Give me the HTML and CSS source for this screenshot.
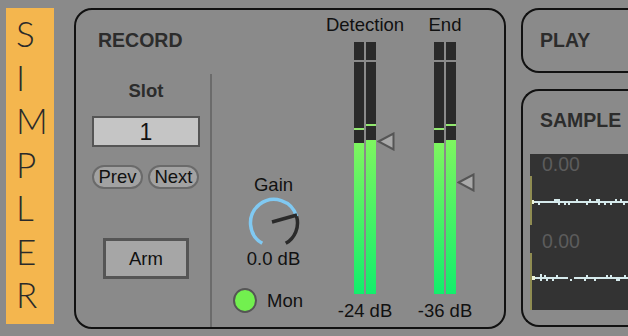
FILE: index.html
```html
<!DOCTYPE html>
<html lang="en">
<head>
  <meta charset="UTF-8">
  <title>Simpler</title>
  <link rel="stylesheet" href="styles.css">
</head>
<body>
  <div class="strip">
    <span>S</span><span>I</span><span>M</span><span>P</span><span>L</span><span>E</span><span>R</span>
  </div>

  <div class="record">
    <div class="rec-left">
      <div class="title">RECORD</div>
      <div class="label bold slot-label">Slot</div>
      <div class="slot-box">1</div>
      <div class="pills">
        <span class="pill">Prev</span>
        <span class="pill">Next</span>
      </div>
      <div class="arm">Arm</div>
    </div>

    <div class="divider"></div>

    <div class="gain-col">
      <div class="label">Gain</div>
      <svg class="knob" width="52" height="52" viewBox="0 0 52 52">
        <path d="M14.25 46.35 A23.5 23.5 0 1 1 48.59 19.52" fill="none" stroke="#80c9f2" stroke-width="3.5"/>
        <path d="M48.59 19.52 A23.5 23.5 0 0 1 37.75 46.35" fill="none" stroke="#2a2a2a" stroke-width="3.5"/>
        <line x1="24" y1="25" x2="49" y2="18" stroke="#2a2a2a" stroke-width="3.5"/>
      </svg>
      <div class="label">0.0 dB</div>
      <div class="mon">
        <span class="led"></span>
        <span class="label">Mon</span>
      </div>
    </div>

    <div class="meter-col">
      <div class="label">Detection</div>
      <div class="meters">
        <div class="meter">
          <div class="seg-top"></div>
          <div class="seg-main">
            <div class="peak" style="margin-bottom:13px"></div>
            <div class="fill" style="height:151px"></div>
          </div>
        </div>
        <div class="meter">
          <div class="seg-top"></div>
          <div class="seg-main">
            <div class="peak" style="margin-bottom:14px"></div>
            <div class="fill" style="height:154px"></div>
          </div>
        </div>
        <svg class="marker" style="top:90px" width="18" height="19" viewBox="0 0 18 19">
          <polygon points="1.5,9.5 16.5,1.5 16.5,17.5" fill="#a9a9a9" stroke="#555" stroke-width="2"/>
        </svg>
      </div>
      <div class="label">-24 dB</div>
    </div>

    <div class="meter-col end">
      <div class="label">End</div>
      <div class="meters">
        <div class="meter">
          <div class="seg-top"></div>
          <div class="seg-main">
            <div class="peak" style="margin-bottom:13px"></div>
            <div class="fill" style="height:151px"></div>
          </div>
        </div>
        <div class="meter">
          <div class="seg-top"></div>
          <div class="seg-main">
            <div class="peak" style="margin-bottom:14px"></div>
            <div class="fill" style="height:154px"></div>
          </div>
        </div>
        <svg class="marker" style="top:131px" width="18" height="19" viewBox="0 0 18 19">
          <polygon points="1.5,9.5 16.5,1.5 16.5,17.5" fill="#a9a9a9" stroke="#555" stroke-width="2"/>
        </svg>
      </div>
      <div class="label">-36 dB</div>
    </div>
  </div>

  <div class="side">
    <div class="panel play">
      <div class="title">PLAY</div>
    </div>
    <div class="panel sample">
      <div class="title">SAMPLE</div>
      <div class="wave">
        <div class="chan first">
          <div class="chan-label">0.00</div>
          <div class="trace">
            <svg width="96" height="49" viewBox="0 0 96 49">
              <rect x="0" y="25" width="96" height="2" fill="#d6eaec"/>
              <rect x="0" y="24" width="2" height="4" fill="#eef3d6"/>
              <rect x="6" y="27" width="2" height="2" fill="#d6eaec"/>
              <rect x="22" y="23" width="6" height="2" fill="#d6eaec"/>
              <rect x="26" y="27" width="2" height="2" fill="#d6eaec"/>
              <rect x="32" y="27" width="2" height="2" fill="#d6eaec"/>
              <rect x="36" y="27" width="2" height="2" fill="#d6eaec"/>
              <rect x="44" y="23" width="2" height="2" fill="#d6eaec"/>
              <rect x="54" y="27" width="2" height="2" fill="#d6eaec"/>
              <rect x="57" y="23" width="2" height="2" fill="#d6eaec"/>
              <rect x="64" y="23" width="4" height="2" fill="#d6eaec"/>
              <rect x="66" y="27" width="2" height="2" fill="#d6eaec"/>
              <rect x="72" y="27" width="2" height="2" fill="#d6eaec"/>
              <rect x="78" y="27" width="2" height="2" fill="#d6eaec"/>
              <rect x="83" y="23" width="2" height="2" fill="#d6eaec"/>
              <rect x="88" y="23" width="2" height="2" fill="#d6eaec"/>
              <rect x="91" y="27" width="2" height="2" fill="#d6eaec"/>
            </svg>
          </div>
        </div>
        <div class="chan">
          <div class="chan-label">0.00</div>
          <div class="trace">
            <svg width="96" height="57" viewBox="0 0 96 57">
              <rect x="0" y="24" width="36" height="2" fill="#d6eaec"/>
              <rect x="42" y="24" width="54" height="2" fill="#d6eaec"/>
              <rect x="0" y="23" width="3" height="4" fill="#eef3d6"/>
              <rect x="8" y="21" width="2" height="3" fill="#d6eaec"/>
              <rect x="8" y="26" width="2" height="2" fill="#d6eaec"/>
              <rect x="12" y="22" width="2" height="2" fill="#d6eaec"/>
              <rect x="14" y="26" width="2" height="2" fill="#d6eaec"/>
              <rect x="20" y="26" width="2" height="2" fill="#d6eaec"/>
              <rect x="24" y="22" width="2" height="2" fill="#d6eaec"/>
              <rect x="38" y="26" width="2" height="2" fill="#d6eaec"/>
              <rect x="52" y="26" width="2" height="2" fill="#d6eaec"/>
              <rect x="54" y="22" width="2" height="2" fill="#d6eaec"/>
              <rect x="62" y="26" width="2" height="2" fill="#d6eaec"/>
              <rect x="74" y="22" width="2" height="2" fill="#d6eaec"/>
              <rect x="78" y="22" width="2" height="2" fill="#d6eaec"/>
              <rect x="84" y="26" width="4" height="2" fill="#d6eaec"/>
              <rect x="92" y="22" width="2" height="2" fill="#d6eaec"/>
            </svg>
          </div>
        </div>
      </div>
    </div>
  </div>
</body>
</html>
```

FILE: styles.css
```css
html, body { margin: 0; padding: 0; overflow: hidden; }
body {
  width: 628px; height: 336px; box-sizing: border-box;
  padding: 8px 0 0 6px;
  background: #8a8a8a; color: #111;
  font-family: "Liberation Sans", Arial, sans-serif;
  display: flex; align-items: flex-start;
}

.strip {
  flex-shrink: 0; width: 48px; height: 316px; box-sizing: border-box;
  padding: 4px 0 0 10px;
  background: #f4b64e; color: #2a2a2a;
  display: flex; flex-direction: column;
  font-family: Lato, "Open Sans", sans-serif; font-weight: 300;
  font-size: 35px; line-height: 43.5px;
}

.title { font-size: 19.5px; line-height: 20px; font-weight: bold; color: #2c2c2c; }
.label { font-size: 18.5px; line-height: 20px; white-space: nowrap; }
.bold { font-weight: bold; color: #2c2c2c; }

.record {
  flex-shrink: 0; width: 432px; height: 321px; box-sizing: border-box;
  margin-left: 20px;
  border: 2px solid #111; border-radius: 18px;
  display: flex;
}

.rec-left {
  width: 134px; box-sizing: border-box; padding: 20px 10px 0 16px;
  display: flex; flex-direction: column;
}
.rec-left .title { margin-left: 6px; }
.slot-label { margin-top: 31px; text-align: center; }
.slot-box {
  margin-top: 15px; height: 31px; box-sizing: border-box; padding-top: 2px;
  background: #c5c5c5; border: 2px solid #555;
  text-align: center; font-size: 23px; line-height: 25px;
}
.pills { margin-top: 18px; display: flex; gap: 5px; }
.pill {
  width: 51px; height: 24px; box-sizing: border-box;
  border: 2px solid #6a6a6a; border-radius: 12px; background: #a2a2a2;
  text-align: center; font-size: 18.5px; line-height: 20px;
}
.arm {
  align-self: center; margin-top: 49px;
  width: 86px; height: 41px; box-sizing: border-box;
  border: 3px solid #555; background: #a6a6a6;
  text-align: center; font-size: 18.5px; line-height: 35px;
}

.divider { width: 2px; margin-top: 64px; background: #6b6b6b; }

.gain-col {
  width: 123px; padding-top: 165px;
  display: flex; flex-direction: column; align-items: center;
}
.knob { display: block; margin-top: 2px; }
.mon {
  align-self: flex-start; margin: 19px 0 0 21px;
  display: flex; align-items: center; gap: 10px;
}
.led {
  width: 24px; height: 25px; box-sizing: border-box;
  border: 2px solid #555; border-radius: 50%; background: #72f04f;
}

.meter-col {
  width: 60px; padding-top: 5px;
  display: flex; flex-direction: column; align-items: center;
}
.meter-col.end { margin-left: 20px; }
.meters { position: relative; margin: 7px 0; display: flex; gap: 2px; height: 252px; }
.meter { width: 10px; display: flex; flex-direction: column; }
.seg-top { height: 18px; background: #2a2a2a; }
.seg-main {
  flex: 1; margin-top: 2px; background: #2a2a2a;
  display: flex; flex-direction: column; justify-content: flex-end;
}
.peak { height: 2px; background: #93e870; }
.fill { background: linear-gradient(#7ef560, #12ee6c); }
.marker { position: absolute; left: 23px; }

.side {
  flex-shrink: 0; width: 107px; margin-left: 15px;
  display: flex; flex-direction: column; gap: 16px;
}
.panel {
  box-sizing: border-box;
  border: 2px solid #111; border-right: none;
  border-radius: 18px 0 0 18px;
}
.play { height: 65px; padding: 20px 0 0 17px; }
.sample { height: 238px; padding-top: 19px; }
.sample .title { margin-left: 17px; }

.wave { margin: 24px 0 0 7px; height: 156px; background: #333; }
.chan { height: 79px; display: flex; flex-direction: column; }
.chan.first { height: 77px; }
.chan-label {
  height: 22px; padding-left: 12px;
  font-size: 19.5px; line-height: 20px; color: #5c5c5c;
}
.trace { flex: 1; border-left: 2px solid #8f8c52; }
.chan.first .trace { flex: none; height: 49px; }
.trace svg { display: block; }
```
